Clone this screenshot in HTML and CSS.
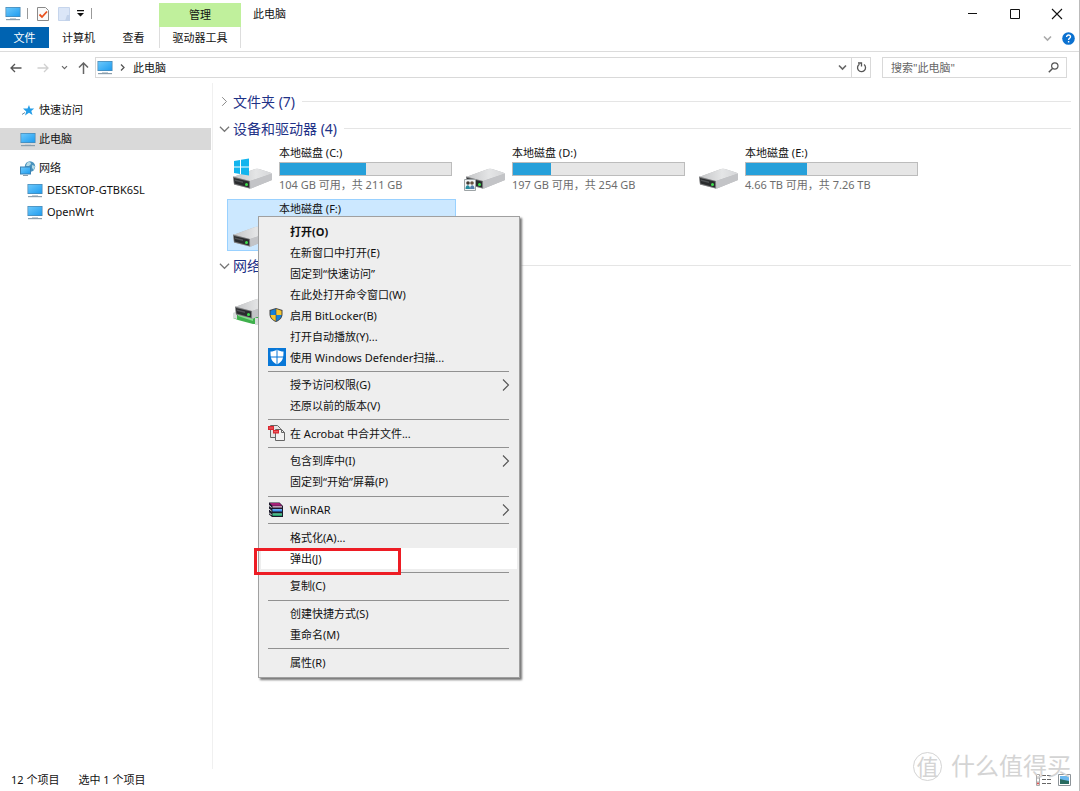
FILE: index.html
```html
<!DOCTYPE html>
<html lang="zh-CN">
<head>
<meta charset="utf-8">
<title>此电脑</title>
<link rel="stylesheet" href="styles.css">
</head>
<body>
<svg class="defs" aria-hidden="true">
  <defs>
    <linearGradient id="screen" x1="0" y1="0" x2="1" y2="1"><stop offset="0" stop-color="#6cc8fb"/><stop offset="1" stop-color="#1f9df0"/></linearGradient>
    <linearGradient id="metal" x1="0" y1="0" x2="1" y2="0"><stop offset="0" stop-color="#c3c4c6"/><stop offset=".6" stop-color="#e4e5e6"/><stop offset="1" stop-color="#d6d7d9"/></linearGradient>
    <symbol id="pc" viewBox="0 0 16 15">
      <rect x=".5" y="1" width="15" height="10" fill="#4a86b0"/>
      <rect x="1.2" y="1.7" width="13.6" height="8.6" fill="url(#screen)"/>
      <path d="M5 12h6v1H5z" fill="#c3ced6"/><path d="M1 13h14v1.2H1z" fill="#8b9eac"/>
    </symbol>
    <symbol id="drive" viewBox="0 0 40 22">
      <path d="M0 9 22 1q2-.5 4 0l11 3.500q2 .5 2 2V12L18 20.500q-1 .5-2 0L1 16.500z" fill="#b9babc"/>
      <path d="M0 9 22 1q2-.5 4 0l11 3.500q2 .7 1 1.500L17 13z" fill="url(#metal)"/>
      <path d="M17 13 39 5.500V12L18 20.500z" fill="#c3c4c7"/>
      <path d="M0 8.500 17 13v7.500L1 16.500z" fill="#77787a"/>
      <path d="M1 10 16 13.500v6L1.500 15.500z" fill="#2a2c2e"/>
      <path d="M2 11.500 10 13.500V15L2 13z" fill="#4f5255"/>
      <circle cx="13.500" cy="16.500" r="1.500" fill="#3ee04d"/>
    </symbol>
    <symbol id="right" viewBox="0 0 8 14"><path d="m1 1.500 5.500 5.500L1 12.500" fill="none" stroke="currentColor" stroke-width="1.100"/></symbol>
    <symbol id="down" viewBox="0 0 12 8"><path d="m1 1.500 5 5 5-5" fill="none" stroke="currentColor" stroke-width="1.300"/></symbol>
    <symbol id="small-down" viewBox="0 0 9 7"><path d="m1 1.500 3.500 3.500L8 1.500" fill="none" stroke="currentColor" stroke-width="1.600"/></symbol>
  </defs>
</svg>
<div class="window">
  <header class="titlebar">
    <div class="quick">
      <svg width="16" height="15"><use href="#pc"/></svg>
      <span class="bar"></span>
      <button class="icon" aria-label="属性"><svg width="12" height="14" viewBox="0 0 12 14"><path d="M.5.500h8l3 3v10H.5z" fill="#fafafa" stroke="#8a8a8a"/><path d="m2.500 7.500 2.500 2.500 5-5.500" fill="none" stroke="#e8501c" stroke-width="1.800"/></svg></button>
      <button class="icon new" aria-label="新建文件夹"><svg width="12" height="14" viewBox="0 0 12 14"><path d="M.5.500h11v13H.5z" fill="#dbe6f7" stroke="#c6d5ec"/><path d="M9 8h3v6H7z" fill="#c2d2ea"/></svg></button>
      <button class="icon" aria-label="自定义快速访问工具栏"><svg width="7" height="7" viewBox="0 0 7 7"><path d="M0 0h7v1.200H0zM0 3h7L3.500 6.500z" fill="#111"/></svg></button>
      <span class="bar last"></span>
    </div>
    <div class="context">管理</div>
    <h1>此电脑</h1>
    <div class="controls">
      <button class="icon" aria-label="最小化"><svg width="12" height="12" viewBox="0 0 12 12"><path d="M1 5.500h9" stroke="#111"/></svg></button>
      <button class="icon" aria-label="最大化"><svg width="12" height="12" viewBox="0 0 12 12"><path d="M1.500 1.500h9v9h-9z" fill="none" stroke="#111"/></svg></button>
      <button class="icon" aria-label="关闭"><svg width="12" height="12" viewBox="0 0 12 12"><path d="m1 1 10 10M11 1 1 11" stroke="#111" stroke-width="1.100"/></svg></button>
    </div>
  </header>
  <nav class="tabs">
    <button class="file">文件</button>
    <button class="computer">计算机</button>
    <button class="view">查看</button>
    <button class="tools">驱动器工具</button>
    <div class="help">
      <button class="icon faint" aria-label="展开功能区"><svg width="9" height="7"><use href="#small-down"/></svg></button>
      <button class="icon" aria-label="帮助"><svg width="13" height="13" viewBox="0 0 13 13"><circle cx="6.500" cy="6.500" r="6.300" fill="#0b71d0"/><path d="M4.600 4.900c0-2.700 4-2.500 3.900-.1C8.500 6.300 6.600 6.300 6.600 8M6.600 9v1.500" fill="none" stroke="#fff" stroke-width="1.400"/></svg></button>
    </div>
  </nav>
  <div class="navbar">
    <button class="icon" aria-label="后退"><svg width="12" height="10" viewBox="0 0 12 10"><path d="M11.500 5H1M5 1 1 5l4 4" fill="none" stroke="#555" stroke-width="1.300"/></svg></button>
    <button class="icon forward" aria-label="前进"><svg width="12" height="10" viewBox="0 0 12 10"><path d="M.5 5H11M7 1l4 4-4 4" fill="none" stroke="#d0d0d0" stroke-width="1.300"/></svg></button>
    <button class="icon recent" aria-label="最近位置"><svg width="7" height="5"><use href="#small-down"/></svg></button>
    <button class="icon up" aria-label="上移"><svg width="11" height="12" viewBox="0 0 11 12"><path d="M5.500 12V1M1 5.500 5.500 1 10 5.500" fill="none" stroke="#666" stroke-width="1.500"/></svg></button>
    <div class="address">
      <svg width="16" height="15"><use href="#pc"/></svg>
      <svg class="crumb" width="5" height="7" viewBox="0 0 5 7"><path d="m1 .5 3 3-3 3" fill="none" stroke="#555" stroke-width="1.300"/></svg>
      <span>此电脑</span>
      <button class="icon drop" aria-label="历史记录"><svg width="9" height="7"><use href="#small-down"/></svg></button>
      <button class="icon refresh" aria-label="刷新"><svg width="11" height="11" viewBox="0 0 11 11"><path d="M8 2.500a4 4 0 1 1-4.500-.3M2 1h3.500v3.500" fill="none" stroke="#555" stroke-width="1.300"/></svg></button>
    </div>
    <div class="search">
      <input type="text" aria-label="搜索" placeholder="搜索&quot;此电脑&quot;">
      <button class="icon" aria-label="开始搜索"><svg width="11" height="11" viewBox="0 0 11 11"><circle cx="6.800" cy="4" r="3.200" fill="none" stroke="#555" stroke-width="1.200"/><path d="M4.500 6.500.8 10.200" stroke="#555" stroke-width="1.500"/></svg></button>
    </div>
  </div>
  <div class="body">
    <aside class="tree">
      <a href="#quick"><svg width="16" height="15" viewBox="0 0 16 15"><path d="m9 2 1.200 3.600h4L11.300 8l1.200 4L9 9.800 5 12.500l1.200-4L3 5.600h4.500z" fill="#259ee8"/><path d="M2 11.500 5 9.500" stroke="#6a8ba4"/></svg>快速访问</a>
      <a href="#pc-root" class="current"><svg width="16" height="15"><use href="#pc"/></svg>此电脑</a>
      <a href="#network"><svg width="16" height="15" viewBox="0 0 16 15"><circle cx="10" cy="5.500" r="5.200" fill="#4a93bd"/><path d="M7 2c2-2 4-1 4 1L9 5 6 5zM12 4l3 1-1 4-2-2z" fill="#b7dbe6"/><path d="M0 5.500h11v8H0z" fill="#3b82b4"/><path d="M1 6.500h9v6H1z" fill="url(#screen)"/><path d="M3 14h5v1H3z" fill="#8b9eac"/></svg>网络</a>
      <a href="#desktop" class="child"><svg width="16" height="15"><use href="#pc"/></svg>DESKTOP-GTBK6SL</a>
      <a href="#openwrt" class="child"><svg width="16" height="15"><use href="#pc"/></svg>OpenWrt</a>
    </aside>
    <main>
      <h2><svg class="closed" width="7" height="11"><use href="#right"/></svg>文件夹 (7)</h2>
      <h2><svg width="11" height="8"><use href="#down"/></svg>设备和驱动器 (4)</h2>
      <div class="tiles">
        <div class="tile">
          <svg class="disk" width="40" height="34" viewBox="0 0 40 34"><use href="#drive" y="11" width="40" height="22"/><path d="m1 4 6-1v6.500H1zM8 2.800 16 1.500v8H8zM1 10.500h6V17l-6-1zM8 10.500h8v8l-8-1.300z" fill="#12b5ee"/></svg>
          <div class="info"><b>本地磁盘 (C:)</b><progress value="50.500" max="100" aria-label="C: 已用空间"></progress><small>104 GB 可用，共 211 GB</small></div>
        </div>
        <div class="tile">
          <svg class="disk" width="40" height="34" viewBox="0 0 40 34"><use href="#drive" y="11" width="40" height="22"/></svg>
          <svg class="shared" width="12" height="12" viewBox="0 0 12 12"><path d="M.5.500h11v11H.5z" fill="#f2f5f5" stroke="#9da3a5"/><circle cx="4" cy="4" r="1.800" fill="#443c35"/><circle cx="8" cy="4" r="1.800" fill="#665141"/><path d="M1.500 10c0-5 4.500-5 4.500 0z" fill="#258b9d"/><path d="M6 10c0-5 4.500-5 4.500 0z" fill="#547eaa"/></svg>
          <div class="info"><b>本地磁盘 (D:)</b><progress value="22" max="100" aria-label="D: 已用空间"></progress><small>197 GB 可用，共 254 GB</small></div>
        </div>
        <div class="tile">
          <svg class="disk" width="40" height="34" viewBox="0 0 40 34"><use href="#drive" y="11" width="40" height="22"/></svg>
          <div class="info"><b>本地磁盘 (E:)</b><progress value="35.500" max="100" aria-label="E: 已用空间"></progress><small>4.66 TB 可用，共 7.26 TB</small></div>
        </div>
        <div class="tile selected">
          <svg class="disk" width="40" height="34" viewBox="0 0 40 34"><use href="#drive" y="13" width="40" height="22"/></svg>
          <div class="info"><b>本地磁盘 (F:)</b></div>
        </div>
      </div>
      <h2><svg width="11" height="8"><use href="#down"/></svg>网络</h2>
      <div class="tiles">
        <div class="tile">
          <svg class="disk" width="40" height="34" viewBox="0 0 40 34"><path d="M0 20q2-2 5-1l15 4h20v7H20L5 26l-5-2z" fill="#3fb04c"/><path d="M5 20 20 25v2L5 22z" fill="#7fe088"/><path d="M0 19q3-2 4 0v6l-4-1zM22 24h5v7h-5z" fill="#d9dddd"/><use href="#drive" x="2" y="4" width="40" height="22"/></svg>
        </div>
      </div>
    </main>
  </div>
  <footer class="status">
    <span>12 个项目</span><span>选中 1 个项目</span>
    <div class="modes">
      <button class="icon" aria-label="详细信息"><svg width="16" height="12" viewBox="0 0 16 12"><path d="M.5.500h3v11h-3z" fill="#fff" stroke="#aaa"/><path d="M1 4h3M1 8h3" stroke="#aaa"/><path d="M6 1.500h4m1 0h4M6 5.500h4m1 0h4M6 9.500h4m1 0h4" stroke="#666"/><circle cx="2" cy="9.500" r="1" fill="#d44"/></svg></button>
      <button class="icon" aria-label="大图标"><svg width="13" height="12" viewBox="0 0 13 12"><path d="M.5.500h12v11H.5z" fill="#fff" stroke="#8d9499"/><path d="M2 2h9v8H2z" fill="#69b7ef"/><path d="m2 5 4 1 5 1v3H2z" fill="#286b60"/></svg></button>
    </div>
  </footer>
  <div class="watermark"><span class="seal">值</span><span>什么值得买</span></div>

  <div class="menu" role="menu">
    <button role="menuitem" class="default">打开(O)</button>
    <button role="menuitem">在新窗口中打开(E)</button>
    <button role="menuitem">固定到“快速访问”</button>
    <button role="menuitem">在此处打开命令窗口(W)</button>
    <button role="menuitem"><svg class="mark" width="18" height="18" viewBox="0 0 18 18"><path d="M8 2 14.500 4v4c0 4-3 6.500-6.500 8-3.500-1.500-6.500-4-6.500-8V4z" fill="#444"/><path d="M7.700 3v6H2.500V4.700z" fill="#1681d8"/><path d="M8.300 3v6h5.200V4.700z" fill="#f8c52c"/><path d="M7.700 9H2.500c.3 3 2.500 4.800 5.200 6z" fill="#f8c52c"/><path d="M8.300 9h5.200c-.3 3-2.500 4.800-5.200 6z" fill="#1681d8"/></svg>启用 BitLocker(B)</button>
    <button role="menuitem">打开自动播放(Y)...</button>
    <button role="menuitem"><svg class="mark" width="18" height="18" viewBox="0 0 18 18"><path d="M0 0h18v18H0z" fill="#0877d7"/><path d="M9 1.500c2 1.500 4.500 2 6.500 2 0 6-.5 10-6.500 13-6-3-6.500-7-6.500-13 2 0 4.500-.5 6.500-2z" fill="#fff"/><path d="M9 1v16M2 9h14" stroke="#0877d7"/></svg>使用 Windows Defender扫描...</button>
    <hr>
    <button role="menuitem">授予访问权限(G)<svg class="arrow" width="8" height="14"><use href="#right"/></svg></button>
    <button role="menuitem">还原以前的版本(V)</button>
    <hr>
    <button role="menuitem"><svg class="mark" width="18" height="18" viewBox="0 0 18 18"><path d="M2.500 1.500h7l3 3v9h-10z" fill="#e4e4e4" stroke="#666"/><path d="M7.500 5.500h6l3 3v8h-9z" fill="#f1f1f1" stroke="#666"/><path d="M13.500 5.500v3h3" fill="none" stroke="#666"/><path d="M0 2h6v4H0zM5 6h6v3.500H5z" fill="#d92830"/><path d="M1 4h4M6 7.700h4" stroke="#ee6a70"/></svg>在 Acrobat 中合并文件...</button>
    <hr>
    <button role="menuitem">包含到库中(I)<svg class="arrow" width="8" height="14"><use href="#right"/></svg></button>
    <button role="menuitem">固定到“开始”屏幕(P)</button>
    <hr>
    <button role="menuitem"><svg class="mark" width="18" height="18" viewBox="0 0 18 18"><path d="M1 1.500h10.500L15 5v11H4l-3-2.500z" fill="#1c1a2b"/><path d="M1.800 2h9.500l2.700 2.800H4.500z" fill="#a51f77"/><path d="M4.500 5.200H14v1.300H4.500z" fill="#e7b9d5"/><path d="M4.500 8H14v2.500H4.500z" fill="#2f86ea"/><path d="M4.500 8.800H14" stroke="#a8d1ff" stroke-width=".7"/><path d="M4.500 12.300H14V15H4.500z" fill="#1f9d66"/><path d="M4.500 13H14" stroke="#a6e7c5" stroke-width=".7"/><path d="M1 4.500 3.500 6.500M1 8l2.500 2M1 11.500 3.500 14" stroke="#eee"/></svg>WinRAR<svg class="arrow" width="8" height="14"><use href="#right"/></svg></button>
    <hr>
    <button role="menuitem">格式化(A)...</button>
    <button role="menuitem" class="hover">弹出(J)<span class="highlight"></span></button>
    <hr>
    <button role="menuitem">复制(C)</button>
    <hr>
    <button role="menuitem">创建快捷方式(S)</button>
    <button role="menuitem">重命名(M)</button>
    <hr>
    <button role="menuitem">属性(R)</button>
  </div>
</div>
</body>
</html>
```
FILE: styles.css
```css
* { box-sizing: border-box; }
body, h1, h2 { margin: 0; font-weight: 400; }
body, button, input { font: 11px/16px "Noto Sans", "Noto Sans CJK SC", sans-serif; color: #111; }
button { border: 0; background: none; padding: 0; text-align: left; white-space: nowrap; }
svg { display: block; flex: none; }
.defs { position: absolute; width: 0; height: 0; }
.icon { display: flex; align-items: center; justify-content: center; flex: none; color: #666; }

.window { position: relative; display: flex; flex-direction: column; min-height: 100vh; background: #fff; border-right: 1px solid #bbb; }

.titlebar { display: flex; align-items: center; height: 27px; }
.quick { display: flex; align-items: center; width: 159px; padding-left: 5px; }
.bar { width: 1px; height: 11px; margin: 0 9px 0 6px; background: #999; }
.bar.last { margin: 0 0 0 7px; }
.quick .new { margin: 0 7px 0 9px; }
.context { width: 82px; height: 24px; align-self: flex-end; background: #c0f09c; text-align: center; line-height: 24px; }
.titlebar h1 { margin-left: 12px; font-size: 11px; line-height: 16px; }
.controls { display: flex; gap: 30px; margin-left: auto; padding-right: 16px; }

.tabs { display: flex; height: 25px; padding-bottom: 3px; border-bottom: 1px solid #dcdcdc; }
.tabs > button { text-align: center; }
.tabs .file { width: 49px; background: #0063b1; color: #fff; }
.computer { width: 59px; }
.view { width: 51px; }
.tools { width: 82px; border: solid #ddd; border-width: 0 1px; }
.help { display: flex; align-items: center; gap: 10px; margin-left: auto; padding: 2px 4px 0 0; }
.faint { color: #aaa; }

.navbar { display: flex; align-items: center; padding: 5px 12px 5px 10px; }
.forward { margin-left: 15px; }
.recent { margin-left: 12px; }
.up { margin: 0 6px 0 10px; }
.address, .search { display: flex; align-items: center; height: 21px; border: 1px solid #d9d9d9; }
.address { flex: 1; padding-left: 1px; color: #555; }
.address span { color: #111; }
.crumb { margin: 0 8px 0 7px; }
.drop { margin-left: auto; padding: 0 4px; }
.refresh { width: 19px; height: 19px; border-left: 1px solid #d9d9d9; }
.search { width: 185px; margin-left: 11px; padding: 0 7px 0 8px; }
.search input { flex: 1; min-width: 0; padding: 0; border: 0; outline: 0; background: none; }
.search input::placeholder { color: #666; opacity: 1; }

.body { display: flex; flex: 1; }
.tree { width: 213px; padding: 16px 1px 0 0; border-right: 1px solid #f0f0f0; }
.tree a { display: flex; align-items: center; gap: 3px; height: 22px; margin-bottom: 7px; padding-left: 20px; color: #111; text-decoration: none; }
.tree a:nth-child(n+3) { margin-bottom: 0; }
.tree .current { background: #d9d9d9; }
.tree .child { padding-left: 27px; gap: 4px; }
main { flex: 1; padding: 5px 8px 0 6px; }
h2 { display: flex; align-items: center; height: 27px; color: #1e3287; font-size: 14px; line-height: 20px; }
h2 svg { margin-right: 3px; color: #777; }
h2 .closed { margin: 0 5px 0 2px; }
h2::after { content: ""; flex: 1; height: 1px; margin-left: 7px; background: #e5e5e5; }
.tiles { display: grid; grid-template-columns: repeat(auto-fill, 229px); gap: 4px; padding: 1px 0 1px 8px; }
.tile { position: relative; display: flex; gap: 6px; height: 52px; padding: 1px 4px 0 5px; border: 1px solid transparent; }
.selected { background: #cce8ff; border-color: #99d1ff; }
.disk { margin-top: 12px; }
.shared { position: absolute; left: 3px; bottom: 3px; }
.info { display: flex; flex-direction: column; flex: 1; }
.info b { font-weight: 400; }
.info small { font-size: 11px; color: #6d6d6d; }
progress { appearance: none; display: block; width: 173px; height: 14px; margin: 1px 0; border: 1px solid #bcbcbc; background: #e6e6e6; }
progress::-webkit-progress-bar { background: #e6e6e6; }
progress::-webkit-progress-value { background: #26a0da; }

.status { display: flex; align-items: center; gap: 19px; height: 22px; padding: 0 8px 0 11px; }
.modes { display: flex; gap: 6px; margin-left: auto; }
.watermark { position: absolute; right: 8px; bottom: 8px; display: flex; align-items: center; gap: 9px; color: #d4d4d4; font-size: 24px; line-height: 34px; pointer-events: none; }
.seal { width: 29px; height: 29px; border: 1px solid #d4d4d4; border-radius: 50%; font-size: 22px; line-height: 26px; text-align: center; }

.menu { position: absolute; left: 258px; top: 216px; display: flex; flex-direction: column; width: 262px; height: 462px; padding: 4px 2px; background: #eee; border: 1px solid #a0a0a0; box-shadow: 2px 2px 2px #777; }
.menu button { position: relative; height: 21px; padding-left: 29px; }
.menu hr { flex: 1; width: 241px; margin: 0 0 0 7px; border: 0; background: linear-gradient(#919191, #919191) center / 100% 1px no-repeat; }
.menu .default { font-weight: 700; }
.menu .hover { background: #fff; }
.mark { position: absolute; left: 7px; top: 1px; }
.arrow { position: absolute; right: 7px; top: 3px; color: #555; }
.highlight { position: absolute; left: -7px; top: 0; width: 147px; height: 27px; border: 3px solid #ed1c24; z-index: 1; }
```
